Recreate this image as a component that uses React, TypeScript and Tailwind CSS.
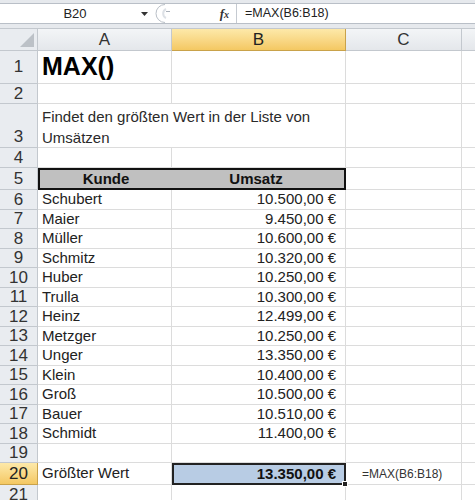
import React from "react";

type RowData = {
  n: number;
  h: string;
  a?: string;
  b?: string;
};

const font = { fontFamily: '"Liberation Sans", Arial, sans-serif' };

const dataRows: RowData[] = [
  { n: 6, h: "h-[20px]", a: "Schubert", b: "10.500,00 €" },
  { n: 7, h: "h-[19px]", a: "Maier", b: "9.450,00 €" },
  { n: 8, h: "h-[20px]", a: "Müller", b: "10.600,00 €" },
  { n: 9, h: "h-[19px]", a: "Schmitz", b: "10.320,00 €" },
  { n: 10, h: "h-[20px]", a: "Huber", b: "10.250,00 €" },
  { n: 11, h: "h-[19px]", a: "Trulla", b: "10.300,00 €" },
  { n: 12, h: "h-[20px]", a: "Heinz", b: "12.499,00 €" },
  { n: 13, h: "h-[19px]", a: "Metzger", b: "10.250,00 €" },
  { n: 14, h: "h-[20px]", a: "Unger", b: "13.350,00 €" },
  { n: 15, h: "h-[19px]", a: "Klein", b: "10.400,00 €" },
  { n: 16, h: "h-[20px]", a: "Groß", b: "10.500,00 €" },
  { n: 17, h: "h-[19px]", a: "Bauer", b: "10.510,00 €" },
  { n: 18, h: "h-[20px]", a: "Schmidt", b: "11.400,00 €" },
  { n: 19, h: "h-[19px]" },
];

function RowHead({ n, active, bottom }: { n: number; active?: boolean; bottom?: boolean }) {
  return (
    <div
      className={
        "w-[38px] shrink-0 flex justify-center border-r border-b text-[17px] leading-[20px] " +
        (bottom ? "items-end " : "items-center ") +
        (active
          ? "bg-gradient-to-b from-[#fde9a9] to-[#f4c862] border-[#c9a24a] text-[#222]"
          : "bg-[#e9ecf0] border-[#c3c8ce] text-[#333]")
      }
    >
      {n}
    </div>
  );
}

function Cell({ w, children, className = "" }: { w: string; children?: React.ReactNode; className?: string }) {
  return (
    <div className={`${w} shrink-0 flex items-center border-r border-b border-[#dcdcdc] overflow-visible whitespace-nowrap ${className}`}>
      {children}
    </div>
  );
}

export default function App() {
  return (
    <div className="w-[475px] h-[500px] overflow-hidden bg-white text-[#1a1a1a]" style={font}>
      {/* formula bar */}
      <div className="h-[28px] bg-[#e6e9ed] pt-[3px] pb-[4px]">
        <div className="h-[21px] flex bg-white border-y border-[#b9bfc7]">
          <div className="w-[150px] shrink-0 flex items-center justify-center text-[13px] text-[#222] relative">
            B20
            <svg className="absolute right-[2px] top-[8px]" width="7" height="4" viewBox="0 0 7 4">
              <path d="M0 0h7L3.5 4z" fill="#333" />
            </svg>
          </div>
          <div className="w-[87px] shrink-0 flex items-center bg-white border-r border-[#c5cad1]">
            <svg width="16" height="21" viewBox="0 0 16 21" className="ml-[5px]">
              <path d="M10 1.5 A9 9 0 0 0 10 19.5" fill="none" stroke="#b9bfc7" strokeWidth="1" />
              <path d="M11 6 A5 5 0 0 0 11 15" fill="none" stroke="#dde1e6" strokeWidth="2" />
              <rect x="11" y="8" width="4" height="1" fill="#aab1ba" />
            </svg>
            <span className="ml-auto mr-[7px] italic font-bold text-[13px] text-[#333]" style={{ fontFamily: '"Liberation Serif", serif' }}>
              f<span className="text-[10px]">x</span>
            </span>
          </div>
          <div className="flex-1 flex items-center pl-[8px] text-[12.5px] text-[#222]">=MAX(B6:B18)</div>
        </div>
      </div>

      {/* column headers */}
      <div className="h-[23px] flex border-t border-[#c3c8ce] text-[17px]">
        <div className="w-[38px] shrink-0 bg-[#e9ecf0] border-r border-b border-[#c3c8ce] flex items-end justify-end p-[3px]">
          <svg width="14" height="14" viewBox="0 0 14 14">
            <path d="M14 0V14H0z" fill="#bcc1c7" />
          </svg>
        </div>
        <div className="w-[134px] shrink-0 flex items-center justify-center bg-gradient-to-b from-[#f3f5f7] to-[#e4e7eb] border-r border-b border-[#c3c8ce] text-[#333]">
          A
        </div>
        <div className="w-[174px] shrink-0 flex items-center justify-center bg-gradient-to-b from-[#fde9a9] to-[#f4c862] border-r border-b border-[#c9a24a] text-[#222]">
          B
        </div>
        <div className="w-[116px] shrink-0 flex items-center justify-center bg-gradient-to-b from-[#f3f5f7] to-[#e4e7eb] border-r border-b border-[#c3c8ce] text-[#333]">
          C
        </div>
        <div className="flex-1 bg-gradient-to-b from-[#f3f5f7] to-[#e4e7eb] border-b border-[#c3c8ce]" />
      </div>

      {/* row 1 */}
      <div className="h-[33px] flex">
        <RowHead n={1} />
        <Cell w="w-[134px]" className="pl-[4px] text-[25px] font-bold text-black">MAX()</Cell>
        <Cell w="w-[174px]" />
        <Cell w="w-[116px]" />
        <div className="flex-1 border-b border-[#dcdcdc]" />
      </div>

      {/* row 2 */}
      <div className="h-[20px] flex">
        <RowHead n={2} />
        <Cell w="w-[134px]" />
        <Cell w="w-[174px]" />
        <Cell w="w-[116px]" />
        <div className="flex-1 border-b border-[#dcdcdc]" />
      </div>

      {/* row 3 */}
      <div className="h-[44px] flex">
        <RowHead n={3} bottom />
        <div className="w-[308px] shrink-0 border-r border-b border-[#dcdcdc] px-[4px] pt-[2px] text-[15px] leading-[21px] text-[#2a2a2a]">
          Findet den größten Wert in der Liste von Umsätzen
        </div>
        <Cell w="w-[116px]" />
        <div className="flex-1 border-b border-[#dcdcdc]" />
      </div>

      {/* row 4 */}
      <div className="h-[20px] flex">
        <RowHead n={4} />
        <Cell w="w-[134px]" />
        <Cell w="w-[174px]" />
        <Cell w="w-[116px]" />
        <div className="flex-1 border-b border-[#dcdcdc]" />
      </div>

      {/* row 5 header */}
      <div className="h-[22px] flex">
        <RowHead n={5} />
        <div className="w-[308px] shrink-0 flex bg-[#c0c0c0] border-2 border-[#111] text-[15px] font-bold text-[#111]">
          <div className="w-[132px] flex items-center justify-center">Kunde</div>
          <div className="flex-1 flex items-center justify-center pr-[4px]">Umsatz</div>
        </div>
        <Cell w="w-[116px]" />
        <div className="flex-1 border-b border-[#dcdcdc]" />
      </div>

      {dataRows.map((r) => (
        <div key={r.n} className={`${r.h} flex text-[15px]`}>
          <RowHead n={r.n} />
          <Cell w="w-[134px]" className="pl-[4px] text-[#222]">{r.a}</Cell>
          <Cell w="w-[174px]" className="justify-end pr-[9px] text-[#222]">{r.b}</Cell>
          <Cell w="w-[116px]" />
          <div className="flex-1 border-b border-[#dcdcdc]" />
        </div>
      ))}

      {/* row 20 */}
      <div className="h-[22px] flex text-[15px]">
        <RowHead n={20} active />
        <Cell w="w-[134px]" className="pl-[4px] text-[#222]">Größter Wert</Cell>
        <div className="w-[174px] shrink-0 relative flex items-center justify-end pr-[8px] bg-[#b8cce4] border-2 border-[#222] font-bold text-[#111]">
          13.350,00 €
          <div className="absolute -right-[4px] -bottom-[4px] w-[6px] h-[6px] bg-[#222] border border-white" />
        </div>
        <Cell w="w-[116px]" className="pl-[16px] text-[12px] text-[#333]">=MAX(B6:B18)</Cell>
        <div className="flex-1 border-b border-[#dcdcdc]" />
      </div>

      {/* row 21 */}
      <div className="h-[20px] flex">
        <RowHead n={21} />
        <Cell w="w-[134px]" />
        <Cell w="w-[174px]" />
        <Cell w="w-[116px]" />
        <div className="flex-1 border-b border-[#dcdcdc]" />
      </div>
    </div>
  );
}
